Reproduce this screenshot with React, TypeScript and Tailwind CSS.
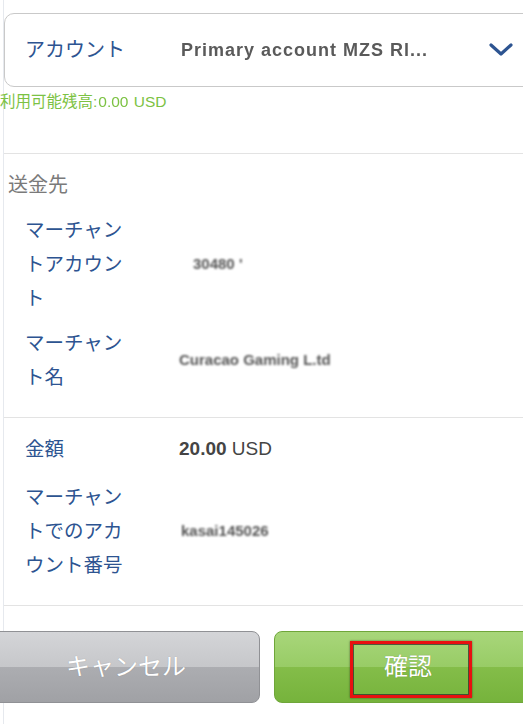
import React from "react";

const Row = ({ label, value, valueClass = "" }: { label: string; value: React.ReactNode; valueClass?: string }) => (
  <div className="grid grid-cols-[110px_1fr] gap-x-[44px] items-center">
    <div className="text-[19.5px] leading-[34px] text-[#2d5491]">{label}</div>
    <div className={"text-[17px] text-[#555] " + valueClass}>{value}</div>
  </div>
);

export default function App() {
  return (
    <div
      className="relative w-[523px] h-[724px] overflow-hidden bg-white"
      style={{ fontFamily: '"Liberation Sans", "Noto Sans CJK JP", "Noto Sans", sans-serif' }}
    >
      <div className="ml-[3px] border-l border-[#e6e9ee] h-full flex flex-col">
        {/* account select */}
        <div className="pt-[13px]">
          <div className="w-[540px] h-[74px] border border-[#c9c9c9] rounded-[10px] flex items-center pl-[20px]">
            <div className="w-[156px] text-[20px] text-[#2d5491]">アカウント</div>
            <div className="w-[290px] truncate text-[18px] font-bold text-[#5a5a5a] blur-[0.7px] tracking-[1px]">
              Primary account MZS Rl...
            </div>
            <svg className="ml-[18px]" width="24" height="14" viewBox="0 0 24 14">
              <path d="M2 2 L12 11 L22 2" fill="none" stroke="#2d5491" strokeWidth="3.2" strokeLinecap="round" strokeLinejoin="round" />
            </svg>
          </div>
          <div className="-ml-[4px] mt-[6px] text-[15.5px] leading-[18px] text-[#7cc243]">
            利用可能残高:<span className="blur-[0.6px] inline-block px-[1px]">0.00</span> USD
          </div>
        </div>

        <div className="mt-[42px] border-t border-[#e3e3e3]" />

        {/* recipient */}
        <div className="pt-[14px] pb-[23px]">
          <div className="pl-[4px] text-[20px] leading-[34px] text-[#7a7a7a]">送金先</div>
          <div className="pl-[21px] mt-[11px] flex flex-col gap-[11px]">
            <Row label="マーチャントアカウント" value={<span className="pl-[14px] blur-[0.8px] font-bold text-[15px]">30480 '</span>} />
            <Row label="マーチャント名" value={<span className="blur-[0.8px] font-bold text-[15px] -mt-[8px] inline-block">Curacao Gaming L.td</span>} />
          </div>
        </div>

        <div className="border-t border-[#e3e3e3]" />

        {/* amount */}
        <div className="pt-[14px] pb-[23px] pl-[21px] flex flex-col gap-[14px]">
          <Row
            label="金額"
            value={
              <span className="text-[19px] text-[#444]">
                <span className="font-bold">20.00</span> USD
              </span>
            }
          />
          <Row
            label="マーチャントでのアカウント番号"
            value={<span className="pl-[2px] blur-[0.8px] font-bold text-[15px] -mt-[12px] inline-block">kasai145026</span>}
          />
        </div>

        <div className="border-t border-[#e3e3e3]" />

        {/* buttons */}
        <div className="mt-[25px] -ml-[12px] flex gap-[14px]">
          <button className="shrink-0 w-[268px] h-[72px] rounded-[8px] border border-[#909195] bg-[linear-gradient(to_bottom,#d4d5d8_0%,#c6c7ca_50%,#acadb1_50%,#a0a1a5_100%)] text-white text-[24px] [text-shadow:0_0_1px_rgba(0,0,0,0.25)]">
            キャンセル
          </button>
          <button className="relative shrink-0 w-[268px] h-[72px] rounded-[8px] border border-[#6fa63a] bg-[linear-gradient(to_bottom,#a8d67a_0%,#98cc66_50%,#84bd49_50%,#76b33c_100%)] text-white text-[24px] [text-shadow:0_0_1px_rgba(0,0,0,0.3)]">
            確認
            <span className="absolute left-[75px] top-[9px] w-[122px] h-[57px] border-[3px] border-[#e81010] shadow-[inset_0_0_0_1px_rgba(40,40,40,0.7),0_0_2px_rgba(0,0,0,0.5)]" />
          </button>
        </div>
      </div>
    </div>
  );
}
